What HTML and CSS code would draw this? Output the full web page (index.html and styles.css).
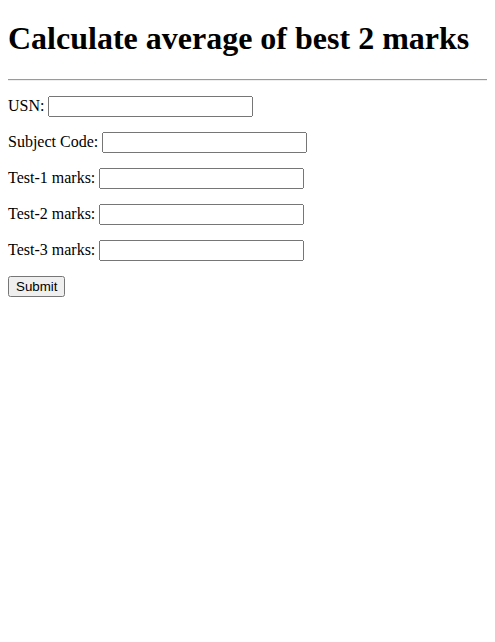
FILE: index.html
```html
<!DOCTYPE html>
<html>
<head>
<meta charset="utf-8">
<title>Average</title>
<link rel="stylesheet" href="styles.css">
</head>
<body class="page">
<h1 class="title">Calculate average of best 2 marks</h1>
<div class="rule"></div>
<form class="form">
<div class="row"><label class="lbl">USN:</label><input type="text" class="field"></div>
<div class="row"><label class="lbl">Subject Code:</label><input type="text" class="field"></div>
<div class="row"><label class="lbl">Test-1 marks:</label><input type="text" class="field"></div>
<div class="row"><label class="lbl">Test-2 marks:</label><input type="text" class="field"></div>
<div class="row"><label class="lbl">Test-3 marks:</label><input type="text" class="field"></div>
<div class="row"><input type="submit" value="Submit" class="btn"></div>
</form>
</body>
</html>
```
FILE: styles.css
```css
.page {
  margin: 8px;
  font-family: "Liberation Serif", serif;
  font-size: 16px;
  color: #000;
  background: #fff;
}
.title {
  font-size: 32px;
  font-weight: bold;
  margin: 12.44px 0 21.44px;
}
.rule {
  height: 0;
  margin: 8px -8px 8px 0;
  border-top: 1px solid #9a9a9a;
  border-bottom: 1px solid #eeeeee;
}
.form {
  margin: 15px 0 0;
  display: flex;
  flex-direction: column;
  gap: 15px;
}
.row {
  display: flex;
  align-items: baseline;
  gap: 4px;
  height: 21px;
}
.field {
  box-sizing: border-box;
  width: 205px;
  height: 21px;
  margin: 0;
}
.btn {
  margin: 0;
  height: 21px;
}
```
